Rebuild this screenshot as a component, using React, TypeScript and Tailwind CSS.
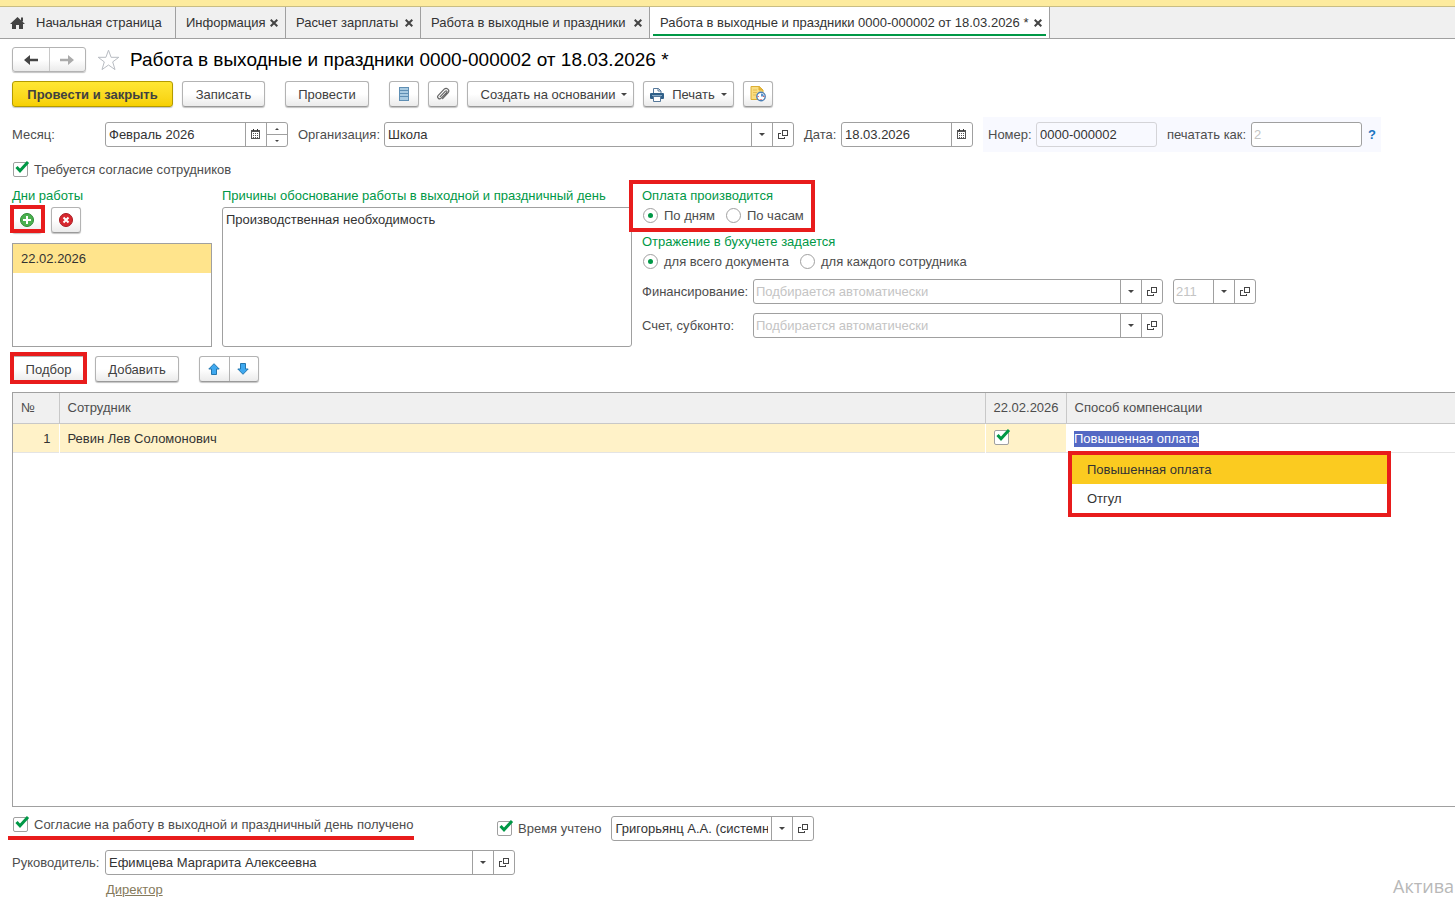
import React, { useState } from 'react';

const tabs = [
  { id: 'info', title: 'Информация', width: 'w-[110px]' },
  { id: 'salary', title: 'Расчет зарплаты', width: 'w-[135px]' },
  { id: 'list', title: 'Работа в выходные и праздники', width: 'w-[229px]' },
  { id: 'doc', title: 'Работа в выходные и праздники 0000-000002 от 18.03.2026 *', width: 'w-[400px]' },
];

const compensationOptions = ['Повышенная оплата', 'Отгул'];

const buttonClass =
  'flex items-center justify-center h-[26px] pt-px rounded-[3px] border border-[#b3b3b3] border-b-[#9a9a9a] bg-linear-to-b from-white from-50% to-[#ebebeb] shadow-[0_1px_1px_#c4c4c4] text-[#404040]';

const iconButtonClass =
  'flex items-center justify-center h-[26px] w-[30px] pb-px rounded-[3px] border border-[#b3b3b3] border-b-[#9a9a9a] bg-linear-to-b from-white from-50% to-[#ebebeb] shadow-[0_1px_1px_#c4c4c4]';

const CloseIcon = () => (
  <svg width="8" height="8" viewBox="0 0 8 8" stroke="#444" strokeWidth="2">
    <path d="M0.7 0.7L7.3 7.3M7.3 0.7L0.7 7.3" />
  </svg>
);

const CaretIcon = () => (
  <svg width="6" height="3" viewBox="0 0 6 3" fill="#444">
    <path d="M0 0h6L3 3z" />
  </svg>
);

const OpenIcon = () => (
  <svg width="10" height="9" viewBox="0 0 10 9" fill="none" stroke="#444" shapeRendering="crispEdges">
    <path d="M4.5 0.5h5v5h-5z" />
    <path d="M3 3.5H0.5v5h6V7" />
  </svg>
);

const CalendarIcon = () => (
  <svg width="10" height="10" viewBox="0 0 10 10" shapeRendering="crispEdges">
    <path d="M0 1h9v9H0z" fill="#555" />
    <path d="M2 0h1v2H2zM6 0h1v2H6z" fill="#333" />
    <path d="M1 3h7v6H1z" fill="#fff" />
    <path d="M2 4h1v1H2zM4 4h1v1H4zM6 4h1v1H6zM2 6h1v1H2zM4 6h1v1H4zM6 6h1v1H6zM2 8h1v1H2zM4 8h1v1H4zM6 8h1v1H6z" fill="#555" />
  </svg>
);

interface FieldProps {
  id: string;
  label: string;
  value?: string;
  placeholder?: string;
  className?: string;
  kind?: 'choice' | 'date' | 'month';
}

const Field: React.FC<FieldProps> = ({ id, label, value = '', placeholder, className = '', kind = 'choice' }) => {
  const [text, setText] = useState(value);
  const side = 'flex w-[21px] shrink-0 items-center justify-center border-l border-[#a0a0a0] pb-px';
  return (
    <div className={`flex h-[25px] rounded-[3px] border border-[#a0a0a0] bg-white ${className}`}>
      <input
        id={id}
        aria-label={label}
        value={text}
        placeholder={placeholder}
        onChange={e => setText(e.target.value)}
        className="min-w-0 flex-1 px-[3px] text-[#333] outline-none placeholder-shown:px-[2px] placeholder:text-[#c4c4c4]"
      />
      {kind === 'choice' ? (
        <>
          <button type="button" aria-label="Выбрать" className={side}><CaretIcon /></button>
          <button type="button" aria-label="Открыть" className={side}><OpenIcon /></button>
        </>
      ) : (
        <button type="button" aria-label="Календарь" className={side}><CalendarIcon /></button>
      )}
      {kind === 'month' && (
        <div className="flex w-[21px] shrink-0 flex-col border-l border-[#a0a0a0]">
          <button type="button" aria-label="Больше" className="flex flex-1 items-center justify-center border-b border-[#a0a0a0]">
            <svg width="4" height="2" viewBox="0 0 4 2" fill="#444"><path d="M0 2h4L2 0z" /></svg>
          </button>
          <button type="button" aria-label="Меньше" className="flex flex-1 items-center justify-center">
            <svg width="4" height="2" viewBox="0 0 4 2" fill="#444"><path d="M0 0h4L2 2z" /></svg>
          </button>
        </div>
      )}
    </div>
  );
};

const Checkbox = ({ label, hideLabel = false }: { label: string; hideLabel?: boolean }) => {
  const [checked, setChecked] = useState(true);
  return (
    <label className="flex h-4 items-center gap-1.5 whitespace-nowrap">
      <span className="relative flex">
        <input
          type="checkbox"
          aria-label={label}
          checked={checked}
          onChange={() => setChecked(!checked)}
          className="size-[15px] appearance-none rounded-[2px] border border-[#a0a0a0] bg-white"
        />
        {checked && (
          <svg className="pointer-events-none absolute -top-px left-[2px]" width="15" height="14" viewBox="0 0 15 14" fill="none" stroke="#009846" strokeWidth="3">
            <path d="M1.5 6L5 9.8L13 1" />
          </svg>
        )}
      </span>
      {!hideLabel && <span className="pt-px">{label}</span>}
    </label>
  );
};

interface RadioGroupProps {
  name: string;
  options: string[];
}

const RadioGroup: React.FC<RadioGroupProps> = ({ name, options }) => {
  const [selected, setSelected] = useState(options[0]);
  return (
    <div className="mt-[3px] ml-px flex h-4 items-center gap-[11px]">
      {options.map(option => (
        <label key={option} className="flex items-center gap-1.5 whitespace-nowrap">
          <input
            type="radio"
            name={name}
            checked={selected === option}
            onChange={() => setSelected(option)}
            className="flex size-[15px] appearance-none items-center justify-center rounded-full border border-[#a0a0a0] bg-white before:size-[5px] before:rounded-full checked:before:bg-[#009846]"
          />
          <span className="pt-px">{option}</span>
        </label>
      ))}
    </div>
  );
};

const TabBar = () => (
  <nav className="flex h-8 border-b border-[#a0a0a0] bg-[#f0f0f0] text-[#333]">
    <button type="button" className="flex w-[176px] shrink-0 items-center border-r border-[#a0a0a0] pl-[10px] whitespace-nowrap">
      <svg className="mr-[11px]" width="15" height="12" viewBox="0 0 15 12" fill="#444">
        <path d="M7.5 0L15 7h-2v5H9V8H6v4H2V7H0z" />
        <path d="M11 0.5h2v4h-2z" />
      </svg>
      Начальная страница
    </button>
    {tabs.map(tab => (
      <div
        key={tab.id}
        className={`relative flex shrink-0 items-center justify-between border-r border-[#a0a0a0] pl-[10px] pr-[7px] whitespace-nowrap ${tab.width} ${tab.id === 'doc' ? 'bg-white' : ''}`}
      >
        <button type="button">{tab.title}</button>
        <button type="button" aria-label="Закрыть"><CloseIcon /></button>
        {tab.id === 'doc' && <span className="absolute bottom-[2px] left-[3px] right-[3px] h-[2px] bg-[#009846]"></span>}
      </div>
    ))}
  </nav>
);

const TitleRow = () => (
  <div className="flex h-[25px] items-center">
    <div className="flex h-[25px] w-[74px] rounded-[3px] border border-[#b3b3b3] bg-linear-to-b from-white from-50% to-[#ebebeb] shadow-[0_1px_1px_#c4c4c4]">
      <button type="button" aria-label="Назад" className="flex flex-1 items-center justify-center border-r border-[#c8c8c8]">
        <svg width="14" height="10" viewBox="0 0 14 10" fill="#444"><path d="M0 5L6 0v3.7h8v2.6H6V10z" /></svg>
      </button>
      <button type="button" aria-label="Вперед" className="flex flex-1 items-center justify-center">
        <svg width="14" height="10" viewBox="0 0 14 10" fill="#ababab"><path d="M14 5L8 0v3.7H0v2.6h8V10z" /></svg>
      </button>
    </div>
    <button type="button" aria-label="В избранное" className="ml-[11px]">
      <svg width="23" height="22" viewBox="0 0 23 22" fill="#fff" stroke="#b8bcc2">
        <path d="M11.5 1.2L14.1 8.3H21.8L15.7 12.9L18 20.6L11.5 16L5 20.6L7.3 12.9L1.2 8.3H8.9z" />
      </svg>
    </button>
    <h1 className="ml-[10px] text-[19px] whitespace-nowrap text-black">Работа в выходные и праздники 0000-000002 от 18.03.2026 *</h1>
  </div>
);

const Toolbar = () => (
  <div className="mt-[9px] flex whitespace-nowrap">
    <button
      type="button"
      className="h-[26px] w-[161px] rounded-[3px] border border-[#b39b00] bg-linear-to-b from-[#ffe733] to-[#f7d000] pt-px font-bold text-[#404040] shadow-[0_1px_1px_#c4c4c4]"
    >
      Провести и закрыть
    </button>
    <button type="button" className={`${buttonClass} ml-[9px] w-[83px]`}>Записать</button>
    <button type="button" className={`${buttonClass} ml-5 w-[84px]`}>Провести</button>
    <button type="button" aria-label="Список" className={`${iconButtonClass} ml-5`}>
      <svg width="10" height="14" viewBox="0 0 10 14" shapeRendering="crispEdges">
        <path d="M0 0h10v14H0z" fill="#5f8fb4" />
        <path d="M1 1h8v2H1zM1 4h8v2H1zM1 7h8v2H1zM1 10h8v3H1z" fill="#a9cbe2" />
      </svg>
    </button>
    <button type="button" aria-label="Файлы" className={`${iconButtonClass} ml-[9px]`}>
      <svg width="14" height="14" viewBox="0 0 14 14" fill="none" stroke="#666" strokeWidth="1.2" strokeLinecap="round">
        <path d="M4.2 9.6L9.4 4.2c1-1 2.3.3 1.3 1.3L5.2 11.2c-1.9 1.9-4.9-.7-2.9-2.9L8.2 2.2c2.4-2.4 6.1.9 3.8 3.6L6.6 11.6" />
      </svg>
    </button>
    <button type="button" className={`${buttonClass} ml-[9px] w-[167px] gap-1.5 pl-[7px]`}>
      Создать на основании
      <CaretIcon />
    </button>
    <button type="button" className={`${buttonClass} ml-[9px] w-[91px]`}>
      <svg className="mr-2" width="14" height="14" viewBox="0 0 14 14">
        <path d="M3.5 5V.5h5L11 3v2" fill="#fff" stroke="#56789a" />
        <path d="M8 .5V3h3" fill="none" stroke="#56789a" />
        <rect y="5" width="14" height="6" rx="1" fill="#2f5f88" />
        <path d="M2 7h10v1H2z" fill="#86a9c6" />
        <path d="M3.5 8.5h7v5h-7z" fill="#fff" stroke="#56789a" />
      </svg>
      Печать
      <span className="ml-1.5"><CaretIcon /></span>
    </button>
    <button type="button" aria-label="История" className={`${iconButtonClass} ml-[9px]`}>
      <svg width="16" height="16" viewBox="0 0 16 16">
        <path d="M1 .5h8L13 4v9.5H1z" fill="#f9dd80" stroke="#dcae35" />
        <path d="M9 .5V4h4z" fill="#e9b93a" stroke="#dcae35" />
        <path d="M3 4h4M3 6.5h4M3 9h3" stroke="#e3bd55" />
        <circle cx="11" cy="10.5" r="4.2" fill="#fff" stroke="#4b7fb5" strokeWidth="1.4" />
        <path d="M11 10.5V7.5a3 3 0 0 1 3 3z" fill="#5d92cc" />
        <path d="M7.7 10.5h1M11 13v1M13.3 10.5h1" stroke="#d33" />
      </svg>
    </button>
  </div>
);

const HeaderFields = () => (
  <div className="mt-[10px] flex h-[35px] items-center whitespace-nowrap">
    <label htmlFor="month" className="w-[93px] shrink-0">Месяц:</label>
    <Field id="month" label="Месяц" value="Февраль 2026" kind="month" className="w-[183px] shrink-0" />
    <label htmlFor="org" className="ml-[10px] w-[86px] shrink-0">Организация:</label>
    <Field id="org" label="Организация" value="Школа" className="max-w-[410px] flex-1" />
    <label htmlFor="date" className="ml-[10px] w-[37px] shrink-0">Дата:</label>
    <Field id="date" label="Дата" value="18.03.2026" kind="date" className="w-[132px] shrink-0" />
    <div className="ml-[10px] flex h-full shrink-0 items-center bg-[#f8f9ff] px-[5px]">
      <label htmlFor="number" className="w-12">Номер:</label>
      <input id="number" readOnly value="0000-000002" className="h-[25px] w-[121px] rounded-[3px] border border-[#d4d4d8] px-[3px] text-[#333]" />
      <label htmlFor="printAs" className="ml-[10px] w-[84px]">печатать как:</label>
      <input id="printAs" placeholder="2" className="h-[25px] w-[111px] rounded-[3px] border border-[#a0a0a0] bg-white px-[2px] placeholder:text-[#c4c4c4]" />
      <button type="button" className="ml-1.5 font-bold text-[#1a74c0]">?</button>
    </div>
  </div>
);

const WorkDays = () => (
  <div className="flex flex-col">
    <h2 className="text-[#009846]">Дни работы</h2>
    <div className="mt-[3px] flex gap-[9px]">
      <div className="relative">
        <button type="button" aria-label="Добавить день" className={iconButtonClass}>
          <svg width="14" height="14" viewBox="0 0 14 14">
            <circle cx="7" cy="7" r="6.5" fill="#4bb04f" stroke="#2c8a35" />
            <path d="M7 3v8M3 7h8" stroke="#fff" strokeWidth="2" />
          </svg>
        </button>
        <span className="pointer-events-none absolute -left-[2px] -right-[3px] -top-[2px] bottom-0 border-4 border-[#e81c1c]"></span>
      </div>
      <button type="button" aria-label="Удалить день" className={iconButtonClass}>
        <svg width="14" height="14" viewBox="0 0 14 14">
          <circle cx="7" cy="7" r="6.5" fill="#d8282f" stroke="#a81c22" />
          <path d="M4.5 4.5l5 5M9.5 4.5l-5 5" stroke="#fff" strokeWidth="2" />
        </svg>
      </button>
    </div>
    <ul className="mt-[10px] flex-1 border border-[#a0a0a0]">
      <li className="bg-[#ffe48c] px-2 pt-[7px] pb-1.5 text-[#333]">22.02.2026</li>
    </ul>
  </div>
);

const PaymentSettings = () => (
  <div className="min-w-0">
    <div className="relative w-fit">
      <h2 className="text-[#009846]">Оплата производится</h2>
      <RadioGroup name="payment" options={['По дням', 'По часам']} />
      <span className="pointer-events-none absolute -top-2 -bottom-[9px] -left-[13px] -right-[11px] border-4 border-[#e81c1c]"></span>
    </div>
    <h2 className="mt-[11px] text-[#009846]">Отражение в бухучете задается</h2>
    <RadioGroup name="accounting" options={['для всего документа', 'для каждого сотрудника']} />
    <div className="mt-[10px] flex items-center">
      <label htmlFor="funding" className="w-[111px] shrink-0">Финансирование:</label>
      <Field id="funding" label="Финансирование" placeholder="Подбирается автоматически" className="w-[410px]" />
      <Field id="kosgu" label="КОСГУ" placeholder="211" className="ml-[10px] w-[83px]" />
    </div>
    <div className="mt-[9px] flex items-center">
      <label htmlFor="account" className="w-[111px] shrink-0">Счет, субконто:</label>
      <Field id="account" label="Счет, субконто" placeholder="Подбирается автоматически" className="w-[410px]" />
    </div>
  </div>
);

const TableToolbar = () => (
  <div className="mt-[9px] flex">
    <div className="relative">
      <button type="button" className={`${buttonClass} w-[73px]`}>Подбор</button>
      <span className="pointer-events-none absolute -top-1 -bottom-[2px] -inset-x-[2px] border-4 border-[#e81c1c]"></span>
    </div>
    <button type="button" className={`${buttonClass} ml-[10px] w-[84px]`}>Добавить</button>
    <div className="ml-5 flex h-[26px] w-[60px] rounded-[3px] border border-[#b3b3b3] border-b-[#9a9a9a] bg-linear-to-b from-white from-50% to-[#ebebeb] shadow-[0_1px_1px_#c4c4c4]">
      <button type="button" aria-label="Вверх" className="flex w-[30px] items-center justify-center border-r border-[#b3b3b3] pr-[2px]">
        <svg width="12" height="12" viewBox="0 0 12 12" fill="#3fa9f0" stroke="#2477ae"><path d="M6 .7L11.2 6H8.5v5.5h-5V6H.8z" /></svg>
      </button>
      <button type="button" aria-label="Вниз" className="flex flex-1 items-center justify-center pr-[2px]">
        <svg width="12" height="12" viewBox="0 0 12 12" fill="#3fa9f0" stroke="#2477ae"><path d="M6 11.3L11.2 6H8.5V.5h-5V6H.8z" /></svg>
      </button>
    </div>
  </div>
);

const EmployeesTable = () => {
  const [compensation, setCompensation] = useState(compensationOptions[0]);
  return (
    <div className="mt-[10px] flex-1 border border-r-0 border-[#a0a0a0]">
      <table className="w-full table-fixed border-collapse text-left">
        <thead>
          <tr className="h-[30px] border-b border-[#c8c8c8] bg-[#f0f0f0]">
            <th className="w-[46px] border-r border-[#c8c8c8] px-2 font-normal">№</th>
            <th className="border-r border-[#c8c8c8] px-2 font-normal">Сотрудник</th>
            <th className="w-[81px] border-r border-[#c8c8c8] px-2 font-normal">22.02.2026</th>
            <th className="w-[389px] px-2 font-normal">Способ компенсации</th>
          </tr>
        </thead>
        <tbody>
          <tr className="h-[29px] border-b border-[#e4e4e4] text-[#333]">
            <td className="border-r border-white bg-[#fff2c8] px-2 pt-[2px] text-right">1</td>
            <td className="border-r border-white bg-[#fff2c8] px-2 pt-[2px]">Ревин Лев Соломонович</td>
            <td className="bg-[#fff2c8] px-2"><Checkbox label="22.02.2026" hideLabel /></td>
            <td className="relative px-2 pt-[2px]">
              <input
                aria-label="Способ компенсации"
                value={compensation}
                onChange={e => setCompensation(e.target.value)}
                className="block field-sizing-content h-4 bg-[#5469c4] text-white outline-none"
              />
              <ul role="listbox" className="absolute top-[27px] left-[2px] w-[323px] border-4 border-[#e81c1c] bg-white">
                {compensationOptions.map(option => (
                  <li key={option} role="option" aria-selected={option === compensation}>
                    <button
                      type="button"
                      onClick={() => setCompensation(option)}
                      className={`block h-[29px] w-full px-[15px] pt-[2px] text-left ${option === compensation ? 'bg-[#fbcb20]' : ''}`}
                    >
                      {option}
                    </button>
                  </li>
                ))}
              </ul>
            </td>
          </tr>
        </tbody>
      </table>
    </div>
  );
};

const Footer = () => (
  <footer className="relative pb-[2px]">
    <div className="mt-[9px] flex h-[25px] items-start">
      <div className="relative w-[485px] pl-px">
        <Checkbox label="Согласие на работу в выходной и праздничный день получено" />
        <span className="absolute top-5 -left-1 h-1 w-[406px] bg-[#e81c1c]"></span>
      </div>
      <div className="flex h-[25px] items-center">
        <Checkbox label="Время учтено" />
        <Field id="user" label="Пользователь" value="Григорьянц А.А. (системный)" className="ml-[10px] w-[203px]" />
      </div>
    </div>
    <div className="mt-[9px] flex items-center">
      <label htmlFor="manager" className="w-[93px]">Руководитель:</label>
      <Field id="manager" label="Руководитель" value="Ефимцева Маргарита Алексеевна" className="w-[410px]" />
    </div>
    <a href="#position" className="mt-[7px] ml-[94px] block w-fit text-[#857a5c] underline">Директор</a>
    <span className="absolute right-0 bottom-[2px] pr-px font-['Open_Sans',sans-serif] text-[18px] leading-6 text-[#b8b8b8]">Актива</span>
  </footer>
);

const App: React.FC = () => {
  return (
    <div className="flex min-h-screen flex-col overflow-x-hidden bg-white font-['Liberation_Sans',Arial,sans-serif] text-[13px] leading-4 text-[#4d4d4d]">
      <div className="h-[7px] border-b border-[#c9bd83] bg-[#fdeb9e]"></div>
      <TabBar />
      <main className="flex flex-1 flex-col pt-2 pl-3">
        <TitleRow />
        <Toolbar />
        <HeaderFields />
        <div className="mt-[9px] ml-px">
          <Checkbox label="Требуется согласие сотрудников" />
        </div>
        <div className="mt-[11px] grid h-[159px] grid-cols-[200px_410px_1fr] gap-[10px]">
          <WorkDays />
          <div className="flex flex-col">
            <label htmlFor="reason" className="whitespace-nowrap text-[#009846]">Причины обоснование работы в выходной и праздничный день</label>
            <textarea
              id="reason"
              defaultValue="Производственная необходимость"
              className="mt-[3px] flex-1 resize-none rounded-[3px] border border-[#a0a0a0] px-[3px] py-1 text-[#333] outline-none"
            />
          </div>
          <PaymentSettings />
        </div>
        <TableToolbar />
        <EmployeesTable />
        <Footer />
      </main>
    </div>
  );
};

export default App;
